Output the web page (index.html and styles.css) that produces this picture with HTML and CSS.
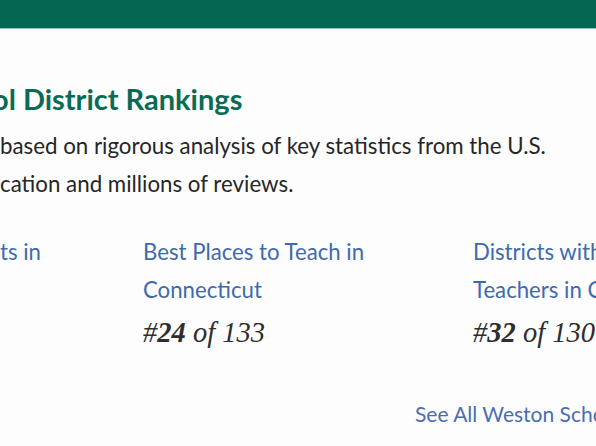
FILE: index.html
```html
<!DOCTYPE html>
<html lang="en">
<head>
<meta charset="utf-8">
<title>School District Rankings</title>
<link rel="stylesheet" href="styles.css">
</head>
<body>
<header class="topbar"></header>
<main class="section">
  <h2 class="title">ol District Rankings</h2>
  <p class="intro">based on rigorous analysis of key statistics from the U.S.<br>cation and millions of reviews.</p>
  <div class="rankings">
    <div class="rank">
      <a class="rank-link" href="#">ts in</a>
    </div>
    <div class="rank">
      <a class="rank-link" href="#">Best Places to Teach in Connecticut</a>
      <div class="rank-value">#<b>24</b> of 133</div>
    </div>
    <div class="rank">
      <a class="rank-link" href="#">Districts with the Best Teachers in Connecticut</a>
      <div class="rank-value">#<b>32</b> of 130</div>
    </div>
  </div>
  <div class="see-all-row">
    <a class="see-all" href="#">See All Weston School Districts</a>
  </div>
</main>
</body>
</html>
```
FILE: styles.css
```css
html, body {
  margin: 0;
  padding: 0;
}
body {
  background: #fdfdfd;
  font-family: Lato, "Noto Sans", sans-serif;
  color: #262626;
  overflow: hidden;
  width: 596px;
  height: 446px;
}
.topbar {
  height: 28px;
  background: #046751;
  border-bottom: 1px solid #8fc3b5;
}
.section {
  padding-top: 51px;
}
.title {
  margin: 0;
  font-size: 29px;
  font-weight: 700;
  line-height: 38px;
  color: #0a6b55;
  text-indent: -8px;
  white-space: nowrap;
}
.intro {
  margin: 9px 0 0;
  font-size: 22.3px;
  line-height: 38px;
  white-space: nowrap;
}
.rankings {
  display: grid;
  grid-template-columns: 143px 330px 300px;
  margin-top: 30px;
  width: 773px;
}
.rank-link {
  display: block;
  font-size: 22.2px;
  line-height: 38px;
  color: #3d6aaf;
  text-decoration: none;
  width: 280px;
}
.rank-value {
  font-family: "Liberation Serif", serif;
  font-style: italic;
  font-size: 28.5px;
  line-height: 48px;
  color: #2e2e2e;
}
.rank-value b {
  font-weight: 700;
}
.see-all-row {
  margin-top: 43px;
  padding-left: 415px;
  white-space: nowrap;
}
.see-all {
  font-size: 21px;
  line-height: 28px;
  color: #4a6db2;
  text-decoration: none;
}
```
